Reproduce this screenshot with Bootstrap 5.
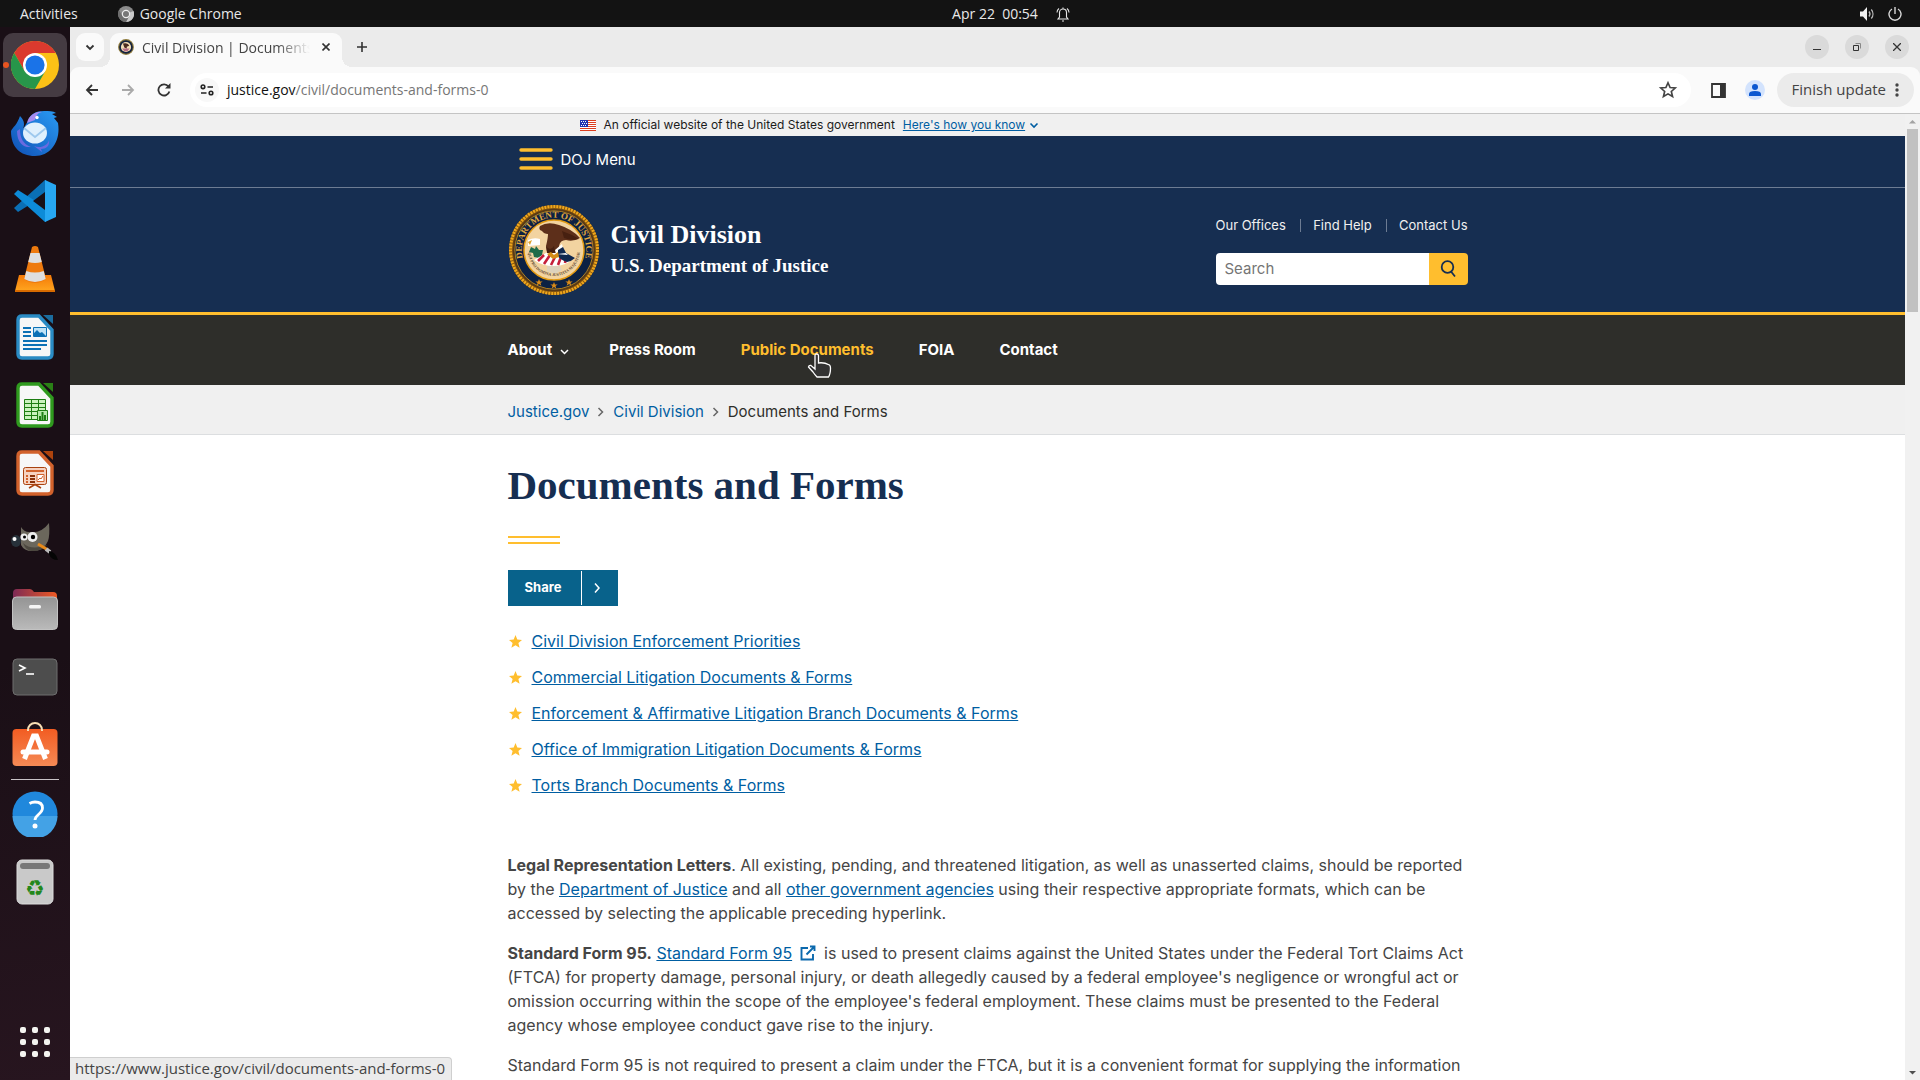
<!DOCTYPE html>
<html lang="en">
<head>
<meta charset="utf-8">
<meta name="viewport" content="width=device-width, initial-scale=1">
<title>Civil Division | Documents and Forms</title>
<link href="https://cdn.jsdelivr.net/npm/bootstrap@5.3.0/dist/css/bootstrap.min.css" rel="stylesheet">
<style>
  :root { --navy:#162e51; --gold:#ffbe2e; --link:#005ea2; --ui:"Open Sans","Noto Sans",sans-serif; --site:Inter,"Liberation Sans",sans-serif; --title:"Liberation Serif",serif; }
  body { font-family:var(--ui); font-size:14px; height:100vh; overflow:hidden; background:#1a0f16; }
  button { font-family:inherit; }
  svg { display:block; flex:none; }
  .plain { border:0; background:none; padding:0; display:flex; align-items:center; justify-content:center; }
  .sysbar { height:27px; background:#131313; color:#e8e8e8; display:grid; grid-template-columns:1fr auto 1fr; align-items:center; }
  .sysbar button { color:inherit; }
  .sysbar .clock { margin-left:102px; gap:18px; }
  .dock { width:70px; background:linear-gradient(170deg,#1a0f16 60%,#27151f); padding-top:4px; }
  .dock-item { width:66px; height:68px; }
  .dock-item > button { width:64px; height:64px; margin:2px 1px; border-radius:10px; position:relative; }
  .dock-item .running { background:#453b42; }
  .running::before { content:""; position:absolute; left:0; top:29px; width:6px; height:6px; border-radius:3px; background:#e95420; }
  .dock-rule { width:48px; height:1px; background:#c9c4c7; }
  .win { min-width:0; background:#ebebeb; }
  .tabstrip { height:40px; padding:6px 11px 0 6px; }
  .tab-search { width:28px; height:28px; border-radius:9px; background:#fafafa; }
  .tab-on { width:232px; height:34px; margin-left:6px; padding:0 8px 6px; background:#fafafa; border-radius:9px 9px 0 0; position:relative; color:#444; }
  .tab-on::before, .tab-on::after { content:""; position:absolute; bottom:0; width:10px; height:10px; }
  .tab-on::before { left:-10px; background:radial-gradient(circle at 0 0,transparent 10px,#fafafa 10px); }
  .tab-on::after { right:-10px; background:radial-gradient(circle at 100% 0,transparent 10px,#fafafa 10px); }
  .tab-title { width:168px; overflow:hidden; white-space:nowrap; -webkit-mask-image:linear-gradient(90deg,#000 80%,transparent); mask-image:linear-gradient(90deg,#000 80%,transparent); }
  .win-btn { width:24px; height:24px; border-radius:12px; background:#dadada; }
  .toolbar { height:47px; background:#fafafa; border-bottom:1px solid #c4c4c4; border-radius:9px 9px 0 0; padding:0 6px 0 12px; }
  .tool { width:20px; height:20px; }
  .omni { height:34px; border-radius:17px; background:#fff; padding:0 13px 0 5px; color:#767676; }
  .omni .site-info { width:24px; height:24px; border-radius:12px; background:#f8f8f8; }
  .omni b { color:#111; font-weight:400; }
  .omni span, .update span { padding-bottom:2px; }
  .update { height:34px; border-radius:17px; background:#ebebeb; padding:0 15px; font-size:15px; color:#444; gap:9px; }
  .avatar { width:20px; height:20px; border-radius:10px; background:#d3e3fd; overflow:hidden; }
  .view { min-height:0; background:#fff; }
  .site { overflow:hidden; min-width:0; font-family:var(--site); font-size:16px; line-height:24px; color:#454545; background:#fff; }
  .wrap { max-width:960px; width:100%; margin:0 auto; }
  .site a { color:var(--link); }
  .gov { height:22px; background:#f0f0f0; font-size:12px; line-height:22px; color:#1b1b1b; }
  .gov-row { max-width:816px; width:100%; margin:0 auto; }
  .gov button { color:var(--link); text-decoration:underline; }
  .head { background:var(--navy); border-bottom:3px solid var(--gold); color:#fff; }
  .menu-row { height:52px; border-bottom:1px solid #6d7c93; }
  .menu-row button { color:#fff; font-size:15px; padding:0 11px 4px; height:51px; }
  .brand-row { height:124px; }
  .head .brand { color:#fff; font-family:var(--title); font-weight:700; text-decoration:none; gap:11px; }
  .brand-text { padding-bottom:3px; }
  .brand-name { font-size:26px; line-height:34px; }
  .brand-sub { font-size:19px; line-height:28px; }
  .find-col { gap:21px; padding-top:3px; }
  .quick { font-size:13px; line-height:16px; }
  .quick a { color:#f0f0f0; text-decoration:none; padding:0 12px; border-left:1px solid #6d7c93; line-height:13px; }
  .quick a:first-child { border:0; padding-left:0; }
  .quick a:last-child { padding-right:0; }
  .find { width:252px; height:32px; }
  .find input { border:0; border-radius:4px 0 0 4px; padding:0 9px; font-size:15px; min-width:0; color:#1b1b1b; }
  .find input::placeholder { color:#757575; opacity:1; }
  .find button { width:39px; flex:none; background:var(--gold); border-radius:0 4px 4px 0; }
  .mainnav { background:#2e2e2a; height:70px; }
  .mainnav .wrap { gap:45px; font-size:15px; font-weight:700; }
  .mainnav a, .mainnav button { color:#fff; text-decoration:none; font-weight:700; }
  .mainnav button { margin-right:-5px; }
  .mainnav a.hovered { color:var(--gold); position:relative; }
  .pointer { position:absolute; left:66px; top:15px; }
  .crumbs { background:#f0f0f0; height:50px; border-bottom:1px solid #dcdee0; padding-top:5px; font-size:15px; color:#2e2e2a; }
  .crumbs a { text-decoration:none; }
  .site h1 { font-family:var(--title); font-weight:700; font-size:41px; line-height:48px; color:var(--navy); margin:26px 0 27px; }
  .rule2 { width:52px; height:8px; border-top:2px solid var(--gold); border-bottom:2px solid var(--gold); }
  .share { margin:26px 0 23px; width:110px; height:36px; background:#08628b; color:#fff; font-size:13px; font-weight:700; }
  .share span { width:73px; padding:0 2px 2px 0; }
  .share i { width:1px; height:34px; background:#fff; }
  .share svg { margin-left:11px; }
  .stars { margin-bottom:56px; }
  .stars li { height:24px; margin-bottom:12px; padding-left:1px; gap:10px; }
  .copy p { margin-bottom:16px; }
  .copy svg { display:inline-block; margin:0 4px 0 3px; vertical-align:-2px; }
  .scroller { width:15px; background:#f1f1f1; flex:none; }
  .thumb { width:11px; height:183px; background:#c1c1c1; }
  .status { position:absolute; left:0; bottom:0; height:23px; padding:0 6px 0 5px; background:#ebebeb; border:solid #cfcfcf; border-width:1px 1px 0 0; border-radius:0 4px 0 0; font-size:15px; line-height:20px; color:#444; }
</style>
<script src="https://cdn.jsdelivr.net/npm/bootstrap@5.3.0/dist/js/bootstrap.bundle.min.js"></script>
</head>
<body class="d-flex flex-column m-0">

<header class="sysbar flex-shrink-0">
  <div class="d-flex align-items-center">
    <button class="plain ms-3 ps-1">Activities</button>
    <button class="plain ms-4" style="gap:6px">
      <svg class="ms-3" width="16" height="16" viewBox="0 0 16 16"><circle cx="8" cy="8" r="8" fill="#8a8a8a"/><path d="M8 8 15.500 5A8 8 0 0 1 8 16l3.500-6z" fill="#c9c9c9"/><path d="M4.500 10 1 4.200A8 8 0 0 0 8 16l2-4z" fill="#6d6d6d"/><circle cx="8" cy="8" r="3.600" fill="#777" stroke="#eee" stroke-width="1.200"/></svg>
      Google Chrome
    </button>
  </div>
  <button class="plain clock"><span>Apr 22&nbsp; 00:54</span>
    <svg width="14" height="16" viewBox="0 0 14 16" fill="none" stroke="#e8e8e8" stroke-width="1.100"><path d="M3.500 11V6.500a3.500 3.500 0 0 1 7 0V11l1.500 2H2zM6 15h2M1 6.500a5 5 0 0 1 2-4M13 6.500a5 5 0 0 0-2-4M7 3V1.500"/></svg>
  </button>
  <div class="d-flex justify-content-end pe-3">
    <button class="plain" aria-label="System menu" style="gap:13px;margin-right:2px">
      <svg width="15" height="14" viewBox="0 0 15 14"><path d="M0 4.500h3L7 0v14L3 9.500H0z" fill="#f0f0f0"/><path d="M9 4.500a4 4 0 0 1 0 5M11.300 2.500a7 7 0 0 1 0 9" fill="none" stroke="#bbb" stroke-width="1.300"/></svg>
      <svg width="14" height="14" viewBox="0 0 14 14" fill="none" stroke="#d8d8d8" stroke-width="1.400"><path d="M4 2a6 6 0 1 0 6 0M7 0v7"/></svg>
    </button>
  </div>
</header>

<div class="d-flex flex-grow-1" style="min-height:0">
  <nav class="dock d-flex flex-column align-items-center flex-shrink-0" aria-label="Dock">
    <div class="dock-item"><button class="plain running" aria-label="Google Chrome">
      <svg width="48" height="48" viewBox="0 0 48 48"><circle cx="24" cy="24" r="24" fill="#fbc116"/><path d="M3.200 12A24 24 0 0 1 44.800 12H24L13.600 30z" fill="#db3a2e"/><path d="M3.200 12A24 24 0 0 0 24 48L34.400 30 24 36 13.600 30z" fill="#27964a"/><circle cx="24" cy="24" r="12" fill="#fff"/><circle cx="24" cy="24" r="9.600" fill="#1a73e8"/></svg></button></div>
    <div class="dock-item"><button class="plain" aria-label="Thunderbird">
      <svg width="48" height="48" viewBox="0 0 48 48"><defs><linearGradient id="tb" x1="1" y1="0" x2="0" y2="1"><stop offset="0" stop-color="#2a9bf4"/><stop offset="1" stop-color="#0f4fb4"/></linearGradient></defs><path d="M0 22c2-4 6-6 9-15 4 4 5 8 3 13l5-8C19 5 25 2 33 2c5 0 9 0 12 2l-4 1 5 3-3 1 4 5c3 18-7 33-23 33C9 47 0 38 0 22z" fill="url(#tb)"/><path d="M16 14C18 6 25 2 31 3c-5 1-6 4-7 8z" fill="#a58bf0"/><circle cx="26" cy="8.500" r="1.700" fill="#fff"/><path d="M6 22c0 12 7 17 14 16-8-3-11-9-11-18zM23 37c7 3 14-1 15-6 1 6-3 9-8 9l1 3z" fill="#6a6be0"/><ellipse cx="24" cy="24" rx="12" ry="10.500" fill="#dff0fd"/><path d="M13 19l11 9 11-9" fill="none" stroke="#9ec9ee" stroke-width="1.800"/></svg></button></div>
    <div class="dock-item"><button class="plain" aria-label="Visual Studio Code">
      <svg width="42" height="42" viewBox="0 0 42 42"><path d="M0 28 4 32 42 8 31 0z" fill="#0a6fb5"/><path d="M0 14l4-4 38 24-11 8z" fill="#0d8bd8"/><path d="M31 0l11 5v32l-11 5z" fill="#27a7f2"/><path d="M31 12v18L19 21z" fill="#180f16"/></svg></button></div>
    <div class="dock-item"><button class="plain" aria-label="VLC">
      <svg width="40" height="46" viewBox="0 0 40 46"><defs><linearGradient id="vl" x2="0" y2="1"><stop stop-color="#f47a08"/><stop offset="1" stop-color="#ffa51f"/></linearGradient></defs><path d="M4 29h32l4 16H0z" fill="url(#vl)"/><path d="M17 1q3-2 6 0l8 32q-11 8-22 0z" fill="#ee7a0e"/><path d="M15.500 7h9l2.300 9q-6.800 2-13.600 0zM11.300 25q8.700 3 17.400 0l2 8q-10.700 6-21.400 0z" fill="#dedede"/><path d="M0 44h40v2H0z" fill="#d86b00"/></svg></button></div>
    <div class="dock-item"><button class="plain" aria-label="LibreOffice Writer">
      <svg width="38" height="46" viewBox="0 0 38 46"><path d="M6 2h17l13 14v24q0 4-4 4H6q-4 0-4-4V6q0-4 4-4z" fill="#f7f7f7" stroke="#2a8bc4" stroke-width="3.400"/><path d="M27 1h10v9z" fill="#1b6d9f"/><path d="M7 14h8M7 18h8M7 22h8M7 27h24M7 31h24M7 35h18" stroke="#0d71b5" stroke-width="2"/><path d="M17.500 13.500h13v9h-13z" fill="#bfe3f7" stroke="#0d71b5"/><path d="M18 22v-3l3-3 3 3 2-1 4 4z" fill="#0d71b5"/></svg></button></div>
    <div class="dock-item"><button class="plain" aria-label="LibreOffice Calc">
      <svg width="38" height="46" viewBox="0 0 38 46"><path d="M6 2h17l13 14v24q0 4-4 4H6q-4 0-4-4V6q0-4 4-4z" fill="#f7f7f7" stroke="#2f9a1e" stroke-width="3.400"/><path d="M27 1h10v9z" fill="#2a8016"/><path d="M8.500 17.500h21v20h-21z" fill="#c9f2bd" stroke="#1d7d12"/><path d="M8 21.500h22M8 25.500h22M8 29.500h22M8 33.500h22M15.500 17v21M22.500 17v21" stroke="#1d7d12"/><path d="M21.500 28.500h10v10h-10z" fill="#b5e8a8" stroke="#1d7d12"/><path d="M24 38v-4M26.500 38v-8M29 38v-5" stroke="#1d7d12" stroke-width="2"/></svg></button></div>
    <div class="dock-item"><button class="plain" aria-label="LibreOffice Impress">
      <svg width="38" height="46" viewBox="0 0 38 46"><path d="M6 2h17l13 14v24q0 4-4 4H6q-4 0-4-4V6q0-4 4-4z" fill="#f7f7f7" stroke="#d2622c" stroke-width="3.400"/><path d="M27 1h10v9z" fill="#ad430d"/><rect x="7.500" y="17.500" width="23" height="17" rx="2" fill="#f6d2c0" stroke="#a8420f"/><path d="M10 21h18" stroke="#d2622c" stroke-width="2"/><path d="M10 26h2M10 29h2M10 32h2" stroke="#d2622c" stroke-width="2"/><path d="M14 26h5M14 29h5M14 32h5" stroke="#8a3108" stroke-width="2"/><path d="M21 24.500h7v7h-7z" fill="#fff" stroke="#d2622c"/><path d="M22 30l2-2 1 1 2-3" fill="none" stroke="#d2622c"/><path d="M13 38l6-3.500 6 3.500" fill="none" stroke="#a8420f" stroke-width="1.600"/></svg></button></div>
    <div class="dock-item"><button class="plain" aria-label="GIMP">
      <svg width="48" height="40" viewBox="0 0 48 40"><path d="M10 6q3 5 8 5 12 2 20-9 1 12-1 18-4 10-16 10-8 0-11-6z" fill="#6b675c"/><path d="M12 22q8 8 24 2-4 6-15 6-6 0-9-8z" fill="#4c483f"/><ellipse cx="5" cy="20" rx="5" ry="6" fill="#27313a"/><circle cx="3.500" cy="18" r="2" fill="#fff"/><circle cx="13" cy="16" r="3.600" fill="#eee"/><circle cx="21.500" cy="16" r="5" fill="#eee"/><circle cx="13.500" cy="16" r="1.500"/><circle cx="22" cy="16" r="2.200"/><path d="M27 23l10 6" stroke="#e88a1a" stroke-width="3"/><path d="M35 28l4 3" stroke="#bbb" stroke-width="4"/><path d="M38 30q7 1 9 9-7 0-9-6z" fill="#050505"/></svg></button></div>
    <div class="dock-item"><button class="plain" aria-label="Files">
      <svg width="46" height="42" viewBox="0 0 46 42"><defs><linearGradient id="fo"><stop stop-color="#7d2a55"/><stop offset="1" stop-color="#ee5a24"/></linearGradient><linearGradient id="fg" x2="0" y2="1"><stop stop-color="#949494"/><stop offset="1" stop-color="#bababa"/></linearGradient></defs><path d="M1 5q0-4 4-4h13q2 0 4 3h19q4 0 4 4v8H1z" fill="url(#fo)"/><rect x=".5" y="9" width="45" height="32.500" rx="4" fill="url(#fg)" stroke="#c2c2c2"/><rect x="17" y="17" width="12" height="3.400" rx="1.500" fill="#f5f5f5"/></svg></button></div>
    <div class="dock-item"><button class="plain" aria-label="Terminal">
      <svg width="46" height="38" viewBox="0 0 46 38"><rect x="1" y="1" width="44" height="36" rx="4" fill="#4d4d4d" stroke="#6e6e6e"/><path d="M7 7l6 3-6 3" fill="none" stroke="#fff" stroke-width="1.600"/><path d="M14 16h8" stroke="#fff" stroke-width="1.600"/></svg></button></div>
    <div class="dock-item"><button class="plain" aria-label="Ubuntu Software">
      <svg width="46" height="46" viewBox="0 0 46 46"><defs><linearGradient id="us" x2="0" y2="1"><stop stop-color="#f25c22"/><stop offset="1" stop-color="#f58a55"/></linearGradient></defs><rect x=".5" y="7" width="45" height="37" rx="4" fill="url(#us)"/><path d="M16 9V8a7 7 0 0 1 14 0v1" fill="none" stroke="#f8dfb4" stroke-width="2"/><path d="M12.500 37l9-23h3l9 23" fill="none" stroke="#fff" stroke-width="5"/><path d="M11 30h24" stroke="#fff" stroke-width="5" stroke-linecap="round"/></svg></button></div>
    <div class="dock-rule"></div>
    <div class="dock-item"><button class="plain" aria-label="Help">
      <svg width="46" height="46" viewBox="0 0 46 46"><circle cx="23" cy="23" r="22.500" fill="#2088dc"/><path d="M.500 25a22.500 22.500 0 0 0 45 0z" fill="#43a2e6"/><path d="M17.500 12.500Q20 11 23 11q7.500 0 7.500 6 0 3-4 6.500-3.500 3-3.500 5.500" fill="none" stroke="#fff" stroke-width="2.800"/><circle cx="23" cy="35" r="2.500" fill="#fff"/></svg></button></div>
    <div class="dock-item"><button class="plain" aria-label="Trash">
      <svg width="38" height="46" viewBox="0 0 38 46"><rect x="1" y="1" width="36" height="44" rx="5" fill="#c9c9c9" stroke="#dcdcdc"/><rect x="4" y="4" width="30" height="6" rx="3" fill="#777"/><text x="19" y="37" text-anchor="middle" font-family="DejaVu Sans" font-size="22" fill="#23871b">♻</text></svg></button></div>
    <button class="plain mt-auto" aria-label="Show applications" style="margin-bottom:23px">
      <svg width="30" height="30" viewBox="0 0 30 30" fill="#f4f4f0"><g id="r3"><rect width="6" height="6" rx="2"/><rect x="12" width="6" height="6" rx="2"/><rect x="24" width="6" height="6" rx="2"/></g><use href="#r3" y="12"/><use href="#r3" y="24"/></svg></button>
  </nav>

  <main class="win d-flex flex-column flex-grow-1">
    <div class="tabstrip d-flex flex-shrink-0">
      <button class="plain tab-search" aria-label="Search tabs"><svg width="10" height="7" viewBox="0 0 10 7"><path d="M1.500 1.500 5 5l3.500-3.500" fill="none" stroke="#333" stroke-width="1.800"/></svg></button>
      <div class="tab-on d-flex align-items-center">
        <svg width="16" height="16" viewBox="0 0 91 91"><circle cx="45.500" cy="45.500" r="45" fill="#8f7b3c"/><circle cx="45.500" cy="45.500" r="39" fill="#13223f"/><circle cx="45.500" cy="45.500" r="29" fill="#f4ddb5"/><path d="M28 26q30-8 36 12l-14 6v12l-14-8z" fill="#4a2a1f"/><path d="M24 54h42l-12 16H36z" fill="#b56a85"/></svg>
        <span class="tab-title ms-2">Civil Division | Documents and Forms</span>
        <button class="plain ms-auto me-1" aria-label="Close tab"><svg width="8" height="8" viewBox="0 0 8 8"><path d="M.500.500l7 7M7.500.500l-7 7" stroke="#333" stroke-width="1.600"/></svg></button>
      </div>
      <button class="plain ms-3 align-self-start" aria-label="New tab" style="width:8px;height:28px"><svg width="10" height="10" viewBox="0 0 10 10"><path d="M5 0v10M0 5h10" stroke="#333" stroke-width="1.600"/></svg></button>
      <div class="d-flex ms-auto gap-3 pt-1" style="margin-top:-2px">
        <button class="plain win-btn" aria-label="Minimize"><svg width="8" height="8" viewBox="0 0 8 8"><path d="M0 6.500h8" stroke="#333"/></svg></button>
        <button class="plain win-btn" aria-label="Restore"><svg width="8" height="8" viewBox="0 0 8 8" fill="none"><path d="M.500 2.500h5v5h-5z" stroke="#333"/><path d="M2.500.500h5v5" stroke="#888"/></svg></button>
        <button class="plain win-btn" aria-label="Close"><svg width="8" height="8" viewBox="0 0 8 8"><path d="M0 0l8 8M8 0L0 8" stroke="#333" stroke-width="1.300"/></svg></button>
      </div>
    </div>
    <div class="toolbar d-flex align-items-center flex-shrink-0">
      <div class="d-flex gap-3">
        <button class="plain tool" aria-label="Back"><svg width="14" height="14" viewBox="0 0 14 14" fill="none" stroke="#333" stroke-width="1.800"><path d="M13 7H2M7 2 2 7l5 5"/></svg></button>
        <button class="plain tool" aria-label="Forward"><svg width="14" height="14" viewBox="0 0 14 14" fill="none" stroke="#aaa" stroke-width="1.800"><path d="M1 7h11M7 2l5 5-5 5"/></svg></button>
        <button class="plain tool" aria-label="Reload"><svg width="14" height="14" viewBox="0 0 14 14"><path d="M12.400 8.500A5.600 5.600 0 1 1 11.500 3.500" fill="none" stroke="#333" stroke-width="1.800"/><path d="M13.500 0v5.500H8z" fill="#333"/></svg></button>
      </div>
      <div class="omni d-flex align-items-center flex-grow-1 ms-3">
        <button class="plain site-info" aria-label="Site information"><svg width="14" height="12" viewBox="0 0 14 12" fill="none" stroke="#222" stroke-width="1.600"><circle cx="3" cy="2.800" r="1.800"/><path d="M7.500 3H13M1 9h5.500"/><circle cx="11" cy="9" r="1.800"/></svg></button>
        <span class="ms-2"><b>justice.gov</b>/civil/documents-and-forms-0</span>
        <button class="plain ms-auto" aria-label="Bookmark"><svg width="20" height="20" viewBox="0 0 18 18"><path d="M9 2.500l1.900 4.300 4.600.400-3.500 3.100 1.100 4.600L9 12.500l-4.100 2.400L6 10.300 2.500 7.200l4.600-.400z" fill="none" stroke="#444" stroke-width="1.500"/></svg></button>
      </div>
      <button class="plain ms-3" aria-label="Side panel" style="margin-right:19px"><svg class="ms-1" width="15" height="15" viewBox="0 0 15 15"><path d="M1 1h13v13H1z" fill="none" stroke="#333" stroke-width="1.800"/><path d="M9 1h5v13H9z" fill="#333"/></svg></button>
      <button class="plain avatar" aria-label="Profile" style="margin-right:12px"><svg width="20" height="20" viewBox="0 0 20 20" fill="#0b57d0"><circle cx="10" cy="7" r="3"/><path d="M4 16v-2q0-3 6-3t6 3v2z"/></svg></button>
      <button class="plain update"><span>Finish update</span><svg width="4" height="14" viewBox="0 0 4 14" fill="#444"><circle cx="2" cy="2" r="1.700"/><circle cx="2" cy="7" r="1.700"/><circle cx="2" cy="12" r="1.700"/></svg></button>
    </div>

    <div class="view d-flex flex-grow-1 position-relative">
      <div class="site flex-grow-1">
        <div class="gov"><div class="gov-row d-flex align-items-center">
          <svg width="16" height="11" viewBox="0 0 16 11"><path fill="#fff" d="M0 0h16v11H0z"/><path d="M0 .500h16M0 2.500h16M0 4.500h16M0 6.500h16M0 8.500h16M0 10.500h16" stroke="#db3e1f"/><path fill="#1e33b1" d="M0 0h8v7H0z"/><path d="M1 1.500h6M2 3.500h5M1 5.500h6" stroke="#fff" stroke-dasharray="1 1"/></svg>
          <span class="ms-2">An official website of the United States government</span>
          <button class="plain ms-2">Here's how you know</button>
          <svg class="ms-1" width="10" height="7" viewBox="0 0 10 7"><path d="M1.500 1.500 5 5l3.500-3.500" fill="none" stroke="#005ea2" stroke-width="1.600"/></svg>
        </div></div>
        <header class="head">
          <div class="menu-row"><div class="wrap"><button class="plain gap-2">
            <svg width="34" height="26" viewBox="0 0 34 26"><path d="M2 3h30M2 12h30M2 21h30" stroke="#ffbe2e" stroke-width="3.400" stroke-linecap="round"/></svg>DOJ Menu</button></div></div>
          <div class="wrap brand-row d-flex align-items-center justify-content-between">
            <a href="#" class="brand d-flex align-items-center">
              <svg width="92" height="92" viewBox="0 0 92 92">
                <circle cx="46" cy="46" r="45" fill="#8a5a10"/>
                <circle cx="46" cy="46" r="43.500" fill="none" stroke="#f0a71c" stroke-width="3" stroke-dasharray="2 1"/>
                <circle cx="46" cy="46" r="40.500" fill="#0c2143" stroke="#5b3a14" stroke-width="1.500"/>
                <circle cx="46" cy="46" r="39.200" fill="none" stroke="#e39a12" stroke-width=".8"/>
                <path id="arcT" d="M16 57.500A32.200 32.200 0 1 1 76 57.500" fill="none"/>
                <text font-family="Liberation Serif" font-size="9" fill="#e0a83f"><textPath href="#arcT" startOffset="50%" text-anchor="middle">DEPARTMENT OF JUSTICE</textPath></text>
                <circle cx="46" cy="46" r="30" fill="#f2d3a0" stroke="#e39a12" stroke-width="1.500"/>
                <path d="M32 22q8-5 19-1 13 4 21 13-7 4-14 2-6 0-7 6l1 12q-6 6-12 0l-2-12q2-8 2-12-4 0-6-3-4-1-2-5z" fill="#5d2f1a"/>
                <path d="M54 27q9 3 17 8-8 2-15-1zM38 42q4 6 8 0l2 12h-8z" fill="#472010"/>
                <path d="M20 36q6-3 12-1v6l-12 1z" fill="#fff"/><path d="M20 38l4-2-2 5z" fill="#e0a22c"/>
                <path d="M23 43l4 2 1-3 3 4 4 0-1 5-3 3-5-1-1-4-4-1z" fill="#1f6b4a"/>
                <path d="M26 56l12-7h18l9 5q-6 8-19 8-12 0-20-6z" fill="#fff"/>
                <path d="M30 57l6-6M36 60l6-9M43 61l5-10M50 61l3-8M57 59l1-5" stroke="#c51f3a" stroke-width="2.600"/>
                <path d="M48 50l6-7 4 6 9 5q-3 3-8 4-7-2-11-8z" fill="#10284f"/><path d="M47 46l7-6q1 7 6 11l-12-1z" fill="#fff"/><path d="M50 46l5-3 3 6-8 1z" fill="#10284f"/>
                <path d="M39 50l4-2 3 3 4-3 1 5-6 2z" fill="#d58d17"/>
                <path d="M39 62h13l2 4-7 4-8-3z" fill="#ddd2bd"/>
                <path id="motto" d="M20 46a26 26 0 0 0 52 0" fill="none"/>
                <text font-family="Liberation Serif" font-size="4" fill="#5b4630"><textPath href="#motto" startOffset="50%" text-anchor="middle">QUI PRO DOMINA JUSTITIA SEQUITUR</textPath></text>
                <g fill="#d98a17"><path id="st" d="M46 78l1 2.500h2.700l-2.200 1.600.800 2.600-2.300-1.600-2.300 1.600.800-2.600-2.200-1.600H45z"/><use href="#st" x="-15" y="-3"/><use href="#st" x="15" y="-3"/></g>
              </svg>
              <span class="brand-text d-flex flex-column"><span class="brand-name">Civil Division</span><span class="brand-sub">U.S. Department of Justice</span></span>
            </a>
            <div class="find-col d-flex flex-column">
              <nav class="quick d-flex align-items-center justify-content-between"><a href="#">Our Offices</a><a href="#">Find Help</a><a href="#">Contact Us</a></nav>
              <form class="find d-flex"><input type="search" aria-label="Search" class="flex-grow-1" placeholder="Search">
                <button type="button" class="plain" aria-label="Search"><svg width="18" height="20" viewBox="0 0 18 20" fill="none" stroke="#162e51" stroke-width="1.800"><circle cx="8.500" cy="8" r="5.800"/><path d="M12 12.500l4 5"/></svg></button></form>
            </div>
          </div>
        </header>
        <nav class="mainnav d-flex align-items-center"><div class="wrap d-flex align-items-center">
          <button class="plain">About<svg class="ms-2 mt-1" width="9" height="6" viewBox="0 0 9 6"><path d="M1 1l3.500 3.500L8 1" fill="none" stroke="#fff" stroke-width="1.500"/></svg></button>
          <a href="#">Press Room</a>
          <a href="#" class="hovered">Public Documents
            <svg class="pointer" width="25" height="26" viewBox="0 0 25 26"><path d="M8 2.500q0-1.500 1.700-1.500t1.800 1.500V10q5-1 11 2 1 1 1 3 0 6-2 9H10q-2-2-4-5l-4.500-5Q2 12 4 12.500L8 16z" fill="#333" stroke="#fff" stroke-width="1.300"/></svg></a>
          <a href="#">FOIA</a>
          <a href="#">Contact</a>
        </div></nav>
        <div class="crumbs d-flex align-items-center"><div class="wrap d-flex align-items-center gap-2">
          <a href="#">Justice.gov</a>
          <svg width="8" height="10" viewBox="0 0 8 10"><path d="M1.500 1l4 4-4 4" fill="none" stroke="#666" stroke-width="1.500"/></svg>
          <a href="#">Civil Division</a>
          <svg width="8" height="10" viewBox="0 0 8 10"><path d="M1.500 1l4 4-4 4" fill="none" stroke="#666" stroke-width="1.500"/></svg>
          <span>Documents and Forms</span>
        </div></div>
        <article class="wrap">
          <h1>Documents and Forms</h1>
          <div class="rule2"></div>
          <button class="plain share justify-content-start"><span>Share</span><i></i><svg width="8" height="12" viewBox="0 0 8 12"><path d="M2 1.500 6 6l-4 4.500" fill="none" stroke="#fff" stroke-width="1.500"/></svg></button>
          <svg width="0" height="0" class="position-absolute"><symbol id="star" viewBox="0 0 13 13"><path d="M6.500 0l1.800 4.500 4.700.400-3.600 3.100 1.200 4.800-4.100-2.600-4.100 2.600L3.600 8 0 4.900l4.700-.400z" fill="#ffbe2e"/></symbol></svg>
          <ul class="stars list-unstyled">
            <li class="d-flex align-items-center"><svg width="13" height="13"><use href="#star"/></svg><a href="#">Civil Division Enforcement Priorities</a></li>
            <li class="d-flex align-items-center"><svg width="13" height="13"><use href="#star"/></svg><a href="#">Commercial Litigation Documents &amp; Forms</a></li>
            <li class="d-flex align-items-center"><svg width="13" height="13"><use href="#star"/></svg><a href="#">Enforcement &amp; Affirmative Litigation Branch Documents &amp; Forms</a></li>
            <li class="d-flex align-items-center"><svg width="13" height="13"><use href="#star"/></svg><a href="#">Office of Immigration Litigation Documents &amp; Forms</a></li>
            <li class="d-flex align-items-center"><svg width="13" height="13"><use href="#star"/></svg><a href="#">Torts Branch Documents &amp; Forms</a></li>
          </ul>
          <div class="copy">
            <p><strong>Legal Representation Letters</strong>. All existing, pending, and threatened litigation, as well as unasserted claims, should be reported by the <a href="#">Department of Justice</a> and all <a href="#">other government agencies</a> using their respective appropriate formats, which can be accessed by selecting the applicable preceding hyperlink.</p>
            <p><strong>Standard Form 95.</strong> <a href="#">Standard Form 95</a> <svg width="16" height="16" viewBox="0 0 16 16" fill="none" stroke="#0b69ad" stroke-width="1.900"><path d="M8 3H1.500v11.500H13V9M10 1.500h4.500V6M14.500 1.500 6.500 9.500"/></svg> is used to present claims against the United States under the Federal Tort Claims Act (FTCA) for property damage, personal injury, or death allegedly caused by a federal employee's negligence or wrongful act or omission occurring within the scope of the employee's federal employment. These claims must be presented to the Federal agency whose employee conduct gave rise to the injury.</p>
            <p>Standard Form 95 is not required to present a claim under the FTCA, but it is a convenient format for supplying the information</p>
          </div>
        </article>
      </div>
      <div class="scroller d-flex flex-column align-items-center" aria-hidden="true">
        <svg width="15" height="15" viewBox="0 0 15 15"><path d="M4 9.500h7L7.500 6z" fill="#a3a3a3"/></svg>
        <div class="thumb"></div>
        <svg class="mt-auto" width="15" height="15" viewBox="0 0 15 15"><path d="M4 6h7L7.500 9.500z" fill="#505050"/></svg>
      </div>
      <div class="status">https://www.justice.gov/civil/documents-and-forms-0</div>
    </div>
  </main>
</div>
</body>
</html>
